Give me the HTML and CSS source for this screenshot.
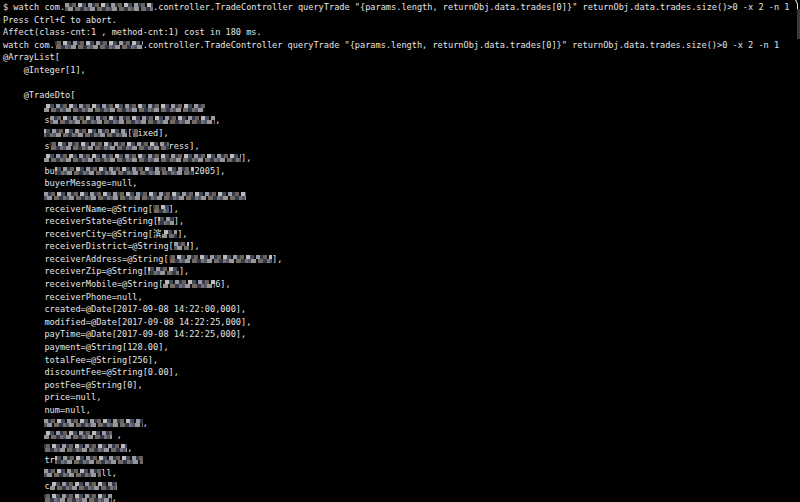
FILE: index.html
```html
<!DOCTYPE html>
<html lang="en">
<head>
    <meta charset="UTF-8">
    <meta name="viewport" content="width=device-width, initial-scale=1.0">
    <title>Terminal</title>
    <link rel="stylesheet" href="styles.css">
</head>
<body>
    <div class="terminal">
        <div class="line">$ watch com.<span class="blur b1" style="--w:17"></span>.controller.TradeController queryTrade "{params.length, returnObj.data.trades[0]}" returnObj.data.trades.size()&gt;0 -x 2 -n 1</div>
        <div class="line">Press Ctrl+C to abort.</div>
        <div class="line">Affect(class-cnt:1 , method-cnt:1) cost in 180 ms.</div>
        <div class="line">watch com.<span class="blur b2" style="--w:17"></span>.controller.TradeController queryTrade "{params.length, returnObj.data.trades[0]}" returnObj.data.trades.size()&gt;0 -x 2 -n 1</div>
        <div class="line">@ArrayList[</div>
        <div class="line in1">@Integer[1],</div>
        <div class="line"></div>
        <div class="line in1">@TradeDto[</div>
        <div class="line in2"><span class="blur b3" style="--w:31"></span></div>
        <div class="line in2">s<span class="blur b1" style="--w:32"></span>,</div>
        <div class="line in2"><span class="blur b4" style="--w:16"></span>[<span class="blur b2" style="--w:1"></span>ixed],</div>
        <div class="line in2">s<span class="blur b2" style="--w:23"></span>ress],</div>
        <div class="line in2"><span class="blur b3" style="--w:38"></span>],</div>
        <div class="line in2">bu<span class="blur b4" style="--w:27"></span>2005],</div>
        <div class="line in2">buyerMessage=null,</div>
        <div class="line in2"><span class="blur b1" style="--w:39"></span></div>
        <div class="line in2">receiverName=@String[<span class="blur b2" style="--w:3"></span>],</div>
        <div class="line in2">receiverState=@String[<span class="blur b4" style="--w:3"></span>],</div>
        <div class="line in2">receiverCity=@String[滨<span class="blur b3" style="--w:3"></span>],</div>
        <div class="line in2">receiverDistrict=@String[<span class="blur b1" style="--w:3"></span>],</div>
        <div class="line in2">receiverAddress=@String[<span class="blur b2" style="--w:20"></span>],</div>
        <div class="line in2">receiverZip=@String[<span class="blur b4" style="--w:6"></span>],</div>
        <div class="line in2">receiverMobile=@String[<span class="blur b3" style="--w:10"></span>6],</div>
        <div class="line in2">receiverPhone=null,</div>
        <div class="line in2">created=@Date[2017-09-08 14:22:00,000],</div>
        <div class="line in2">modified=@Date[2017-09-08 14:22:25,000],</div>
        <div class="line in2">payTime=@Date[2017-09-08 14:22:25,000],</div>
        <div class="line in2">payment=@String[128.00],</div>
        <div class="line in2">totalFee=@String[256],</div>
        <div class="line in2">discountFee=@String[0.00],</div>
        <div class="line in2">postFee=@String[0],</div>
        <div class="line in2">price=null,</div>
        <div class="line in2">num=null,</div>
        <div class="line in2"><span class="blur b1" style="--w:19"></span>,</div>
        <div class="line in2"><span class="blur b3" style="--w:13"></span> ,</div>
        <div class="line in2"><span class="blur b2" style="--w:16"></span>,</div>
        <div class="line in2">tr<span class="blur b4" style="--w:17"></span></div>
        <div class="line in2"><span class="blur b1" style="--w:11"></span>ll,</div>
        <div class="line in2">c<span class="blur b3" style="--w:13"></span></div>
        <div class="line in2"><span class="blur b2" style="--w:13"></span>,</div>
    </div>
    <div class="corner"></div>
    <div class="scrollbar"></div>
</body>
</html>
```

FILE: styles.css
```css
html, body {
    margin: 0;
    height: 100%;
    background-color: #000;
    overflow: hidden;
}
.terminal {
    padding: 1px 0 0 3px;
    font-family: "DejaVu Sans Mono", "Noto Sans CJK SC", monospace;
    font-size: 8.6px;
    line-height: 12.6px;
    color: #e4e4e4;
}
.line {
    height: 12.6px;
    white-space: pre;
}
.in1 {
    padding-left: 4ch;
}
.in2 {
    padding-left: 8ch;
}

/* pixelated (censored) text */
.blur {
    display: inline-block;
    width: calc(var(--w) * 1ch);
    height: 8px;
    vertical-align: -1px;
    background-image:
        linear-gradient(90deg, rgba(205,205,215,.75) 0 4px, rgba(60,72,95,.8) 4px 7px, rgba(150,138,125,.7) 7px 11px, rgba(20,20,30,.5) 11px 13px, rgba(235,235,240,.8) 13px 17px, rgba(95,105,125,.7) 17px 21px, rgba(40,40,48,.4) 21px 23px),
        linear-gradient(90deg, rgba(120,122,140,.7) 0 3px, rgba(215,215,220,.7) 3px 8px, rgba(35,35,45,.5) 8px 10px, rgba(165,150,138,.7) 10px 15px, rgba(70,82,105,.7) 15px 19px, rgba(190,190,200,.6) 19px 22px);
    background-size: 23px 4px, 22px 4px;
    background-repeat: repeat-x;
    background-position: 0 0, 0 4px;
}
.b2 {
    background-position: -5px 0, -9px 4px;
}
.b3 {
    background-position: -11px 0, -3px 4px;
}
.b4 {
    background-position: -15px 0, -13px 4px;
}
.corner {
    position: absolute;
    top: -3px;
    right: 2px;
    width: 9px;
    height: 12px;
    border-top: 1.5px solid #e6e6e6;
    border-right: 1.5px solid #e6e6e6;
    border-top-right-radius: 8px;
}
.scrollbar {
    position: absolute;
    top: 9px;
    right: 0;
    width: 3px;
    height: 30px;
    background-color: #3a3a3a;
}
```
